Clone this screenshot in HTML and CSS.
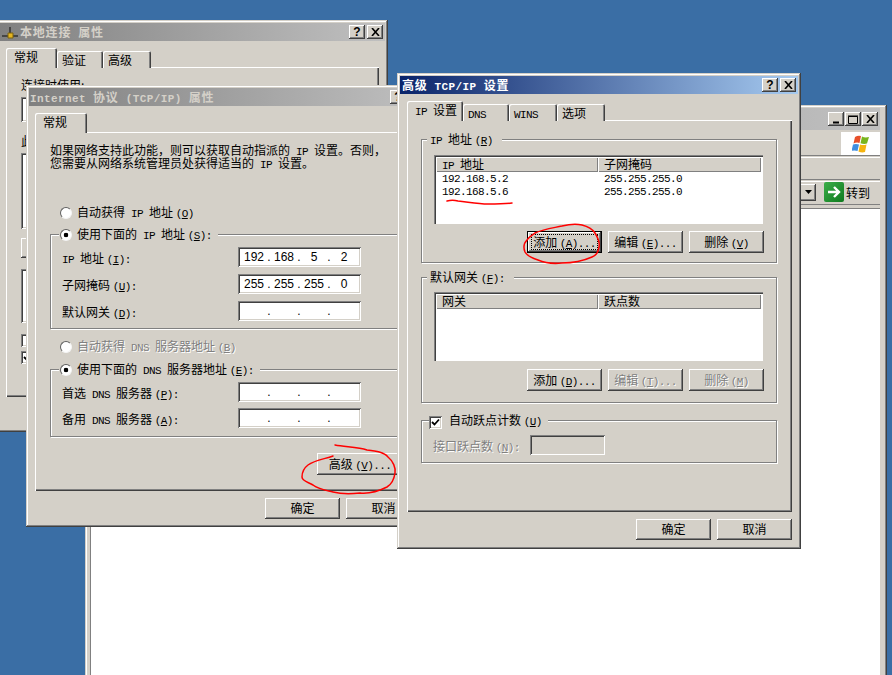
FILE: index.html
```html
<!DOCTYPE html>
<html lang="zh">
<head>
<meta charset="utf-8">
<title>高级 TCP/IP 设置</title>
<link rel="stylesheet" href="styles.css">
</head>
<body>
<div class="browser">
  <div class="b-title">
    <span class="tbtn"><svg width="10" height="9" viewBox="0 0 10 9"><path d="M2 7.500h6" stroke="#000" stroke-width="2"/></svg></span>
    <span class="tbtn"><svg width="10" height="9" viewBox="0 0 10 9"><path d="M.5 1.500h9v7h-9z" fill="none" stroke="#000"/><path d="M0 1h10" stroke="#000"/></svg></span>
    <span class="tbtn tbtn-last"><svg width="9" height="8" viewBox="0 0 9 8"><path d="M1 0l7 8M8 0l-7 8" stroke="#000" stroke-width="1.600"/></svg></span>
  </div>
  <div class="b-menu">
    <div class="b-flag">
      <svg width="20" height="18" viewBox="0 0 20 18"><path d="M3 2q3-2 6-1L7.500 8q-3-1-6 .5z" fill="#e8502a"/><path d="M10 1.500q3 1.500 7 .5l-2 6.500q-3 1-6.500-.3z" fill="#7ab51d"/><path d="M1 9.500q3-1 6 0L5.500 16q-3-1-6 0z" fill="#3f8ee0"/><path d="M8 9.500q3 1.200 6.500 0L13 17q-3 1-6.500-.5z" fill="#f6b40e"/></svg>
    </div>
  </div>
  <div class="b-row"></div>
  <div class="b-row b-addr">
    <span class="combo"><svg width="7" height="4" viewBox="0 0 7 4"><path d="M0 0h7L3.500 4z"/></svg></span>
    <span class="go"><svg width="16" height="16" viewBox="0 0 16 16"><path d="M2 8h10M8 3l5 5-5 5" fill="none" stroke="#fff" stroke-width="2.400"/></svg></span>
    <span class="go-text">转到</span>
  </div>
  <div class="b-content"></div>
</div>

<section class="win win-a">
  <header class="title title-off">
    <svg class="t-icon" width="16" height="14" viewBox="0 0 16 14"><path d="M0 11h16M8 2v7" stroke="#333" stroke-width="1.500"/><path d="M6 8h5v5H6z" fill="#e5b520" stroke="#7a6210"/></svg>
    <span class="t-text">本地连接<span class="lb"> </span>属性</span>
    <span class="tbtn tbtn-q">?</span>
    <span class="tbtn tbtn-last"><svg width="9" height="8" viewBox="0 0 9 8"><path d="M1 0l7 8M8 0l-7 8" stroke="#000" stroke-width="1.600"/></svg></span>
  </header>
  <div class="body">
    <div class="tabs">
      <span class="tab tab-on tab-w51">常规</span>
      <span class="tab tab-w46">验证</span>
      <span class="tab tab-w48">高级</span>
    </div>
    <div class="panel panel-a">
      <div class="a-label">连接时使用:</div>
      <div class="sunk a-box1"></div>
      <div class="a-label a-label2">此</div>
      <div class="sunk a-box2"></div>
      <div class="btn a-btn"></div>
      <div class="sunk a-box3"></div>
      <div class="check a-check1"></div>
      <div class="check a-check2"><svg width="9" height="9" viewBox="0 0 9 9"><path d="M1 4l2.500 2.500L8 1.500" fill="none" stroke="#000" stroke-width="1.800"/></svg></div>
    </div>
  </div>
</section>

<section class="win win-b">
  <header class="title title-off">
    <span class="t-text t-text-b"><span class="lb">Internet </span>协议<span class="lb"> (TCP/IP) </span>属性</span>
    <span class="tbtn tbtn-q">?</span>
    <span class="tbtn tbtn-last"><svg width="9" height="8" viewBox="0 0 9 8"><path d="M1 0l7 8M8 0l-7 8" stroke="#000" stroke-width="1.600"/></svg></span>
  </header>
  <div class="body">
    <div class="tabs"><span class="tab tab-on tab-w52">常规</span></div>
    <div class="panel panel-b">
      <p class="intro">如果网络支持此功能&#xFF0C;则可以获取自动指派的<span class="l"> IP </span>设置。否则&#xFF0C;<br>您需要从网络系统管理员处获得适当的<span class="l"> IP </span>设置。</p>
      <div class="radio-row intro-gap"><span class="radio"></span>自动获得<span class="l"> IP </span>地址 <span class="l">(<u>O</u>)</span></div>
      <fieldset class="group group-b">
        <legend class="legend-b"><span class="radio radio-on"></span>使用下面的<span class="l"> IP </span>地址 <span class="l">(<u>S</u>):</span></legend>
        <div class="field"><label class="f-label"><span class="l">IP </span>地址 <span class="l">(<u>I</u>):</span></label><div class="sunk ip"><span class="oct">192</span><span class="dot">.</span><span class="oct">168</span><span class="dot">.</span><span class="oct">5</span><span class="dot">.</span><span class="oct">2</span></div></div>
        <div class="field"><label class="f-label">子网掩码 <span class="l">(<u>U</u>):</span></label><div class="sunk ip"><span class="oct">255</span><span class="dot">.</span><span class="oct">255</span><span class="dot">.</span><span class="oct">255</span><span class="dot">.</span><span class="oct">0</span></div></div>
        <div class="field"><label class="f-label">默认网关 <span class="l">(<u>D</u>):</span></label><div class="sunk ip"><span class="oct"></span><span class="dot">.</span><span class="oct"></span><span class="dot">.</span><span class="oct"></span><span class="dot">.</span><span class="oct"></span></div></div>
      </fieldset>
      <div class="radio-row dns-auto off"><span class="radio"></span>自动获得<span class="l"> DNS </span>服务器地址 <span class="l">(<u>B</u>)</span></div>
      <fieldset class="group group-b group-dns">
        <legend class="legend-b"><span class="radio radio-on"></span>使用下面的<span class="l"> DNS </span>服务器地址 <span class="l">(<u>E</u>):</span></legend>
        <div class="field"><label class="f-label">首选<span class="l"> DNS </span>服务器 <span class="l">(<u>P</u>):</span></label><div class="sunk ip"><span class="oct"></span><span class="dot">.</span><span class="oct"></span><span class="dot">.</span><span class="oct"></span><span class="dot">.</span><span class="oct"></span></div></div>
        <div class="field"><label class="f-label">备用<span class="l"> DNS </span>服务器 <span class="l">(<u>A</u>):</span></label><div class="sunk ip"><span class="oct"></span><span class="dot">.</span><span class="oct"></span><span class="dot">.</span><span class="oct"></span><span class="dot">.</span><span class="oct"></span></div></div>
      </fieldset>
      <div class="btn btn-adv">高级 <span class="l">(<u>V</u>)...</span></div>
    </div>
    <div class="foot"><span class="btn btn-foot">确定</span><span class="btn btn-foot">取消</span></div>
  </div>
</section>

<section class="win win-c">
  <header class="title title-on">
    <span class="t-text">高级<span class="lb"> TCP/IP </span>设置</span>
    <span class="tbtn tbtn-q">?</span>
    <span class="tbtn tbtn-last"><svg width="9" height="8" viewBox="0 0 9 8"><path d="M1 0l7 8M8 0l-7 8" stroke="#000" stroke-width="1.600"/></svg></span>
  </header>
  <div class="body">
    <div class="tabs">
      <span class="tab tab-on tab-w56"><span class="l">IP </span>设置</span>
      <span class="tab tab-w46"><span class="l">DNS</span></span>
      <span class="tab tab-w48"><span class="l">WINS</span></span>
      <span class="tab tab-w48">选项</span>
    </div>
    <div class="panel panel-c">
      <fieldset class="group group-c">
        <legend class="legend-c"><span class="l">IP </span>地址 <span class="l">(<u>R</u>)</span></legend>
        <div class="list">
          <div class="l-head"><span class="col1"><span class="l">IP </span>地址</span><span class="col2">子网掩码</span></div>
          <div class="l-row"><span class="cell1">192.168.5.2</span><span class="cell2">255.255.255.0</span></div>
          <div class="l-row"><span class="cell1">192.168.5.6</span><span class="cell2">255.255.255.0</span></div>
        </div>
        <div class="btns">
          <span class="btn btn-def"><span class="focus">添加 <span class="l">(<u>A</u>)...</span></span></span>
          <span class="btn">编辑 <span class="l">(<u>E</u>)...</span></span>
          <span class="btn">删除 <span class="l">(<u>V</u>)</span></span>
        </div>
      </fieldset>
      <fieldset class="group group-c group-gw">
        <legend class="legend-c">默认网关 <span class="l">(<u>F</u>):</span></legend>
        <div class="list">
          <div class="l-head"><span class="col1">网关</span><span class="col2">跃点数</span></div>
        </div>
        <div class="btns">
          <span class="btn">添加 <span class="l">(<u>D</u>)...</span></span>
          <span class="btn off">编辑 <span class="l">(<u>T</u>)...</span></span>
          <span class="btn off">删除 <span class="l">(<u>M</u>)</span></span>
        </div>
      </fieldset>
      <fieldset class="group group-c group-auto">
        <legend class="legend-auto"><span class="check check-inline"><svg width="9" height="9" viewBox="0 0 9 9"><path d="M1 4l2.500 2.500L8 1.500" fill="none" stroke="#000" stroke-width="1.800"/></svg></span>自动跃点计数 <span class="l">(<u>U</u>)</span></legend>
        <div class="field off"><label class="f-label f-label-c">接口跃点数 <span class="l">(<u>N</u>):</span></label><div class="sunk metric"></div></div>
      </fieldset>
    </div>
    <div class="foot foot-c"><span class="btn btn-foot">确定</span><span class="btn btn-foot">取消</span></div>
  </div>
</section>

<svg class="ink" width="892" height="675" viewBox="0 0 892 675">
  <path d="M335 445C345 447 358 447 367 450 376 451 384 452 388 457 393 461 396 468 395 473 394 480 392 484 387 487 379 491 370 494 360 493 350 494 341 494 333 492 325 490 318 489 313 485 308 482 302 481 302 477 302 472 304 468 308 465 315 460 325 459 333 456"/>
  <path d="M562 226C570 224 578 224 582 225 590 227 593 230 595 233 598 238 600 243 599 247 598 252 597 255 592 257 583 261 573 263 562 263 553 264 545 263 538 260 532 258 527 256 525 252 523 247 524 243 527 240 530 236 533 235 535 233 544 229 553 228 562 226"/>
  <path d="M447 201C451 200 454 200 458 201 468 202 478 204 488 204 496 204 504 204 512 203"/>
</svg>
</body>
</html>
```
FILE: styles.css
```css
* { box-sizing: border-box; }
html, body { height: 100%; }
body {
  margin: 0;
  overflow: hidden;
  background: #3a6ea5;
  color: #000;
  font: 12px/13px "Noto Sans CJK SC", "Liberation Sans", sans-serif;
}
u { text-decoration: underline; }
p { margin: 0; }

.l {
  font-family: "Liberation Mono", monospace;
  font-size: 11px;
  letter-spacing: -.6px;
  line-height: 0;
  white-space: pre;
}
.lb {
  font-family: "Liberation Mono", monospace;
  font-size: 11px;
  font-weight: 700;
  letter-spacing: .4px;
  line-height: 0;
  white-space: pre;
}

/* desktop windows */
.win, .browser {
  position: absolute;
  background: #d4d0c8;
}
.win {
  padding: 3px;
  display: flex;
  flex-direction: column;
  box-shadow: inset -1px -1px #404040, inset 1px 1px #d4d0c8, inset -2px -2px #808080, inset 2px 2px #fff;
}
.win-a { left: -3px; top: 20px; width: 391px; height: 412px; }
.win-b { left: 26px; top: 85px; width: 404px; height: 442px; }
.win-c { left: 397px; top: 73px; width: 404px; height: 476px; }
.browser {
  left: 85px;
  top: 105px;
  width: 802px;
  height: 570px;
  padding: 3px 7px 0 5px;
  display: flex;
  flex-direction: column;
  box-shadow: inset -1px 0 #404040, inset 1px 1px #d4d0c8, inset -2px 0 #808080, inset 2px 2px #fff;
}

/* title bars */
.title { height: 18px; display: flex; align-items: center; padding: 0 2px; flex: none; }
.win-b .title { padding-right: 3px; }
.title-off { background: linear-gradient(90deg, #808080, #c0c0c0); color: #d4d0c8; }
.title-on { background: linear-gradient(90deg, #0a246a, #a6caf0); color: #fff; }
.t-icon { flex: none; margin-right: 2px; }
.t-text { flex: 1; padding-bottom: 2px; font-weight: 700; letter-spacing: .8px; white-space: nowrap; }
.t-text-b { margin-left: -1px; }
.tbtn {
  width: 16px;
  height: 14px;
  margin-left: 1px;
  flex: none;
  display: flex;
  align-items: center;
  justify-content: center;
  background: #d4d0c8;
  color: #000;
  box-shadow: inset -1px -1px #404040, inset 1px 1px #fff, inset -2px -2px #808080;
}
.tbtn-q { font: 700 12px/14px "Liberation Sans", sans-serif; margin-right: 2px; }
.tbtn-last { margin-left: 0; }

/* tabs and panels */
.body { flex: 1; display: flex; flex-direction: column; padding: 7px 6px 0 7px; min-height: 0; }
.win-a .body, .win-b .body { padding-left: 6px; }
.tabs { display: flex; align-items: flex-end; height: 20px; flex: none; position: relative; z-index: 1; margin-bottom: -1px; }
.tab {
  height: 17px;
  padding-left: 5px;
  line-height: 17px;
  white-space: nowrap;
  background: #d4d0c8;
  border-radius: 2px 2px 0 0;
  box-shadow: inset 1px 1px #fff, inset -1px 0 #404040, inset -2px 0 #808080;
}
.tab-on { height: 20px; padding-left: 8px; line-height: 17px; position: relative; z-index: 2; }
.tab-w46 { width: 46px; }
.tab-w48 { width: 48px; }
.tab-w51 { width: 51px; }
.tab-w52 { width: 52px; }
.tab-w56 { width: 56px; }
.panel {
  flex: none;
  background: #d4d0c8;
  box-shadow: inset 1px 1px #fff, inset -1px -1px #404040, inset -2px -2px #808080;
  display: flex;
  flex-direction: column;
}
.panel-a { height: 330px; padding: 11px 15px; }
.panel-b { height: 359px; padding: 11px 15px; }
.panel-c { height: 392px; padding: 13px 14px; }

/* shared controls */
.sunk {
  background: #fff;
  box-shadow: inset 1px 1px #808080, inset -1px -1px #fff, inset 2px 2px #404040, inset -2px -2px #d4d0c8;
}
.btn {
  display: block;
  width: 75px;
  height: 22px;
  flex: none;
  line-height: 21px;
  text-align: center;
  background: #d4d0c8;
  box-shadow: inset -1px -1px #404040, inset 1px 1px #fff, inset -2px -2px #808080;
  white-space: nowrap;
}
.btn-def {
  padding-top: 4px;
  line-height: 14px;
  box-shadow: inset 0 0 0 1px #000, inset -2px -2px #404040, inset 2px 2px #fff, inset -3px -3px #808080;
}
.focus {
  display: block;
  width: 65px;
  height: 14px;
  margin: 0 auto;
  line-height: 14px;
  outline: 1px dotted #000;
}
.off, .off .l { color: #808080; text-shadow: 1px 1px #fff; }
.radio {
  display: inline-block;
  width: 12px;
  height: 12px;
  border-radius: 50%;
  flex: none;
  background: #fff;
  border: 1px solid;
  border-color: #606060 #f4f4f4 #f4f4f4 #606060;
  margin-right: 5px;
  vertical-align: -2px;
}
.radio-on { background: radial-gradient(circle, #000 2px, #fff 2.600px); }
.check {
  width: 13px;
  height: 13px;
  display: flex;
  align-items: center;
  justify-content: center;
  flex: none;
  background: #fff;
  box-shadow: inset 1px 1px #808080, inset -1px -1px #fff, inset 2px 2px #404040, inset -2px -2px #d4d0c8;
}
.check-inline { display: inline-flex; vertical-align: -2px; margin-right: 7px; }
.group {
  margin: 0;
  min-width: 0;
  border: 1px solid #808080;
  box-shadow: inset 1px 1px #fff, 1px 1px #fff;
  background: transparent;
}
legend { height: 13px; padding: 0; line-height: 11px; background: #d4d0c8; white-space: nowrap; }

/* first window */
.a-label { height: 13px; white-space: nowrap; }
.a-box1 { width: 350px; height: 25px; margin-top: 6px; }
.a-label2 { margin-top: 12px; }
.a-box2 { width: 350px; height: 76px; margin-top: 6px; }
.a-btn { margin-top: 9px; height: 20px; }
.a-box3 { width: 350px; height: 54px; margin-top: 11px; }
.a-check1 { margin-top: 11px; }
.a-check2 { margin-top: 4px; }

/* second window */
.intro { white-space: nowrap; }
.intro-gap { margin-top: 36px; }
.radio-row { display: block; margin-left: 10px; height: 13px; white-space: nowrap; }
.group-b { width: 357px; margin-top: 10px; padding: 6px 0 7px 11px; display: flex; flex-direction: column; gap: 7px; }
.legend-b { margin-left: -3px; padding: 0 6px 0 1px; }
.dns-auto { margin-top: 10px; }
.group-dns { margin-top: 11px; padding-bottom: 8px; gap: 6px; }
.field { display: flex; align-items: center; height: 20px; }
.f-label { width: 176px; line-height: 11px; white-space: nowrap; }
.f-label-c { width: 97px; }
.ip { width: 123px; height: 20px; display: flex; align-items: center; padding: 0 3px 0 2px; line-height: 16px; }
.oct { flex: 1; text-align: center; font-family: "Liberation Sans", sans-serif; font-size: 12px; }
.dot { width: 2px; font-family: "Liberation Sans", sans-serif; font-size: 12px; display: flex; justify-content: center; }
.btn-adv { width: 86px; margin: 16px 0 0 267px; }
.foot { display: flex; gap: 6px; justify-content: flex-end; margin-top: 7px; }
.btn-foot { height: 21px; line-height: 20px; }

/* third window */
.group-c { width: 356px; padding: 9px 0 9px 12px; }
.legend-c { margin-left: -7px; padding: 0 9px 0 3px; }
.group-gw { margin-top: 8px; padding: 8px 0 11px 12px; }
.group-auto { margin-top: 11px; padding: 8px 0 7px 11px; }
.legend-auto { margin-left: -4px; padding: 0 6px 0 0; }
.list {
  width: 329px;
  height: 69px;
  padding: 2px;
  background: #fff;
  box-shadow: inset 1px 1px #808080, inset 2px 2px #404040, inset -1px -1px #fff;
}
.l-head { display: flex; height: 15px; margin-bottom: 1px; }
.col1, .col2 {
  height: 15px;
  padding-left: 6px;
  background: #d4d0c8;
  box-shadow: inset 1px 1px #fff, inset -1px -1px #808080;
  line-height: 14px;
}
.col1 { width: 162px; }
.col2 { width: 163px; }
.l-row { display: flex; height: 13px; font: 11px/13px "Liberation Mono", monospace; letter-spacing: -.6px; }
.cell1 { width: 162px; padding-left: 6px; }
.cell2 { padding-left: 6px; }
.btns { display: flex; gap: 6px; margin-top: 7px; padding-left: 93px; }
.group-gw .btns { margin-top: 8px; }
.metric { width: 75px; height: 20px; background: #d4d0c8; }

/* browser behind the dialogs */
.b-title { height: 22px; padding: 4px 2px 0 0; display: flex; justify-content: flex-end; align-items: flex-start; background: linear-gradient(90deg, #808080, #c0c0c0); flex: none; }
.b-title .tbtn { margin-left: 1px; }
.b-menu { height: 24px; margin-top: 2px; flex: none; display: flex; justify-content: flex-end; box-shadow: inset 0 -1px #808080; }
.b-flag { width: 39px; height: 23px; padding-left: 2px; background: #fff; display: flex; align-items: center; justify-content: center; }
.b-row { height: 23px; margin-top: 1px; flex: none; box-shadow: inset 0 -1px #808080, inset 0 1px #fff; }
.b-addr { display: flex; align-items: center; padding: 0 0 2px 710px; height: 24px; }
.combo {
  width: 16px;
  height: 17px;
  display: flex;
  align-items: center;
  justify-content: center;
  background: #d4d0c8;
  box-shadow: inset -1px -1px #404040, inset 1px 1px #fff, inset -2px -2px #808080;
}
.go {
  width: 20px;
  height: 20px;
  margin-left: 8px;
  border-radius: 2px;
  display: flex;
  align-items: center;
  justify-content: center;
  background: linear-gradient(135deg, #3cae4a, #0e7a1e);
}
.go-text { margin-left: 2px; }
.b-content { flex: 1; margin-top: 3px; background: #fff; box-shadow: inset 1px 1px #808080; }

/* hand-drawn red marks over the screenshot */
.ink { position: absolute; left: 0; top: 0; pointer-events: none; }
.ink path { fill: none; stroke: #f00; stroke-width: 1.500; stroke-linecap: round; }
```
